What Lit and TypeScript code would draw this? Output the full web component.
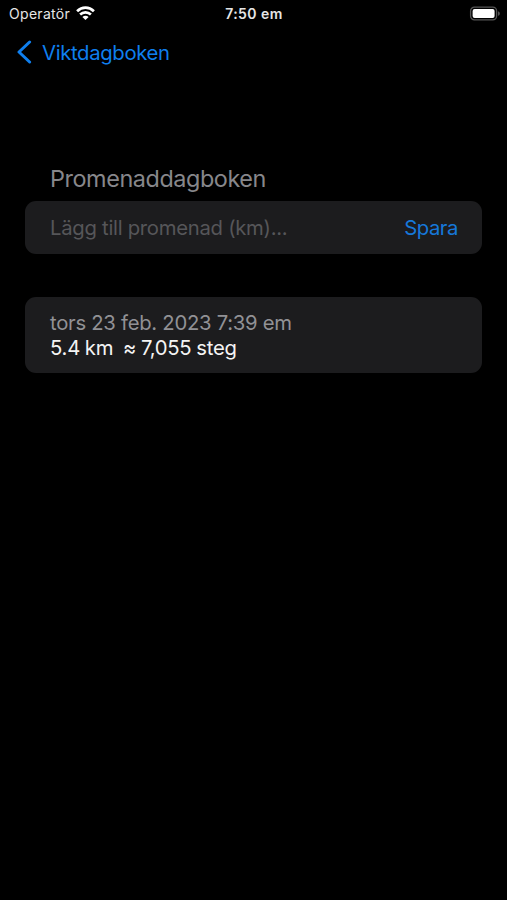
import { LitElement, html, css } from "lit";
import { customElement } from "lit/decorators.js";

@customElement("status-bar")
class StatusBar extends LitElement {
  static styles = css`
    :host { display: grid; grid-template-columns: 1fr auto 1fr; align-items: center; height: 28px; padding: 0 6px 0 9px; color: #e6e6e6; font-size: 14px; line-height: 28px; }
    .carrier { display: flex; align-items: center; gap: 6px; }
    .name { letter-spacing: 0.3px; }
    .wifi { width: 19px; height: 14px; margin-top: -2px; }
    .time { font-weight: 600; font-size: 14px; letter-spacing: 0.45px; margin-right: 2px; }
    .battery { justify-self: end; width: 32px; height: 15px; margin-top: -1px; }
  `;
  render() {
    return html`
      <div class="carrier">
        <span class="name">Operatör</span>
        <svg class="wifi" viewBox="0 0 19 14" fill="none" stroke="#fff" stroke-width="2.7">
          <path d="M1.1 5.3C6 .5 13 .5 17.9 5.3" />
          <path d="M4.1 8.6C7.2 5.7 11.8 5.7 14.9 8.6" />
          <path d="M9.5 14L6.4 10.9C8.2 9.4 10.8 9.4 12.6 10.9Z" fill="#fff" stroke="none" />
        </svg>
      </div>
      <span class="time">7:50 em</span>
      <svg class="battery" viewBox="0 0 32 15">
        <rect x="1.6" y="1.1" width="26" height="12.8" rx="3.8" fill="none" stroke="#555" stroke-width="1.3" />
        <rect x="3.6" y="3" width="22" height="9" rx="2" fill="#fff" />
        <path d="M29.2 5.2C31.2 6 31.2 9 29.2 9.8Z" fill="#666" />
      </svg>
    `;
  }
}

@customElement("app-root")
class AppRoot extends LitElement {
  static styles = css`
    :host { display: flex; flex-direction: column; box-sizing: border-box; height: 900px; background: #000; overflow: hidden; font-family: Inter, "Liberation Sans", sans-serif; font-size: 20.3px; letter-spacing: -0.28px; }
    .nav { display: flex; align-items: center; gap: 10px; height: 48px; padding-left: 17px; color: #0f7fee; }
    .chevron { width: 15px; height: 24px; }
    .back { letter-spacing: -0.34px; }
    .content { display: flex; flex-direction: column; padding: 87px 25px 0 25px; }
    .title { margin: 0 0 7px; padding-left: 25px; color: #87878b; font-weight: 400; font-size: 23.4px; line-height: 31px; letter-spacing: -0.42px; }
    .card { box-sizing: border-box; width: 457px; border-radius: 11px; background: #1c1c1e; padding: 0 24px 0 25px; }
    .entry { display: flex; align-items: center; justify-content: space-between; height: 53px; margin-bottom: 43px; }
    .hint { color: #565659; }
    .save { color: #1678da; letter-spacing: -0.45px; }
    .log { display: flex; flex-direction: column; justify-content: center; height: 76px; line-height: 25px; }
    .date { color: #919195; }
    .walk { color: #f4f4f4; white-space: pre; letter-spacing: -0.25px; word-spacing: -0.6px; }
  `;
  render() {
    return html`
      <status-bar></status-bar>
      <div class="nav">
        <svg class="chevron" viewBox="0 0 15 24" fill="none" stroke="currentColor" stroke-width="3" stroke-linecap="round" stroke-linejoin="round">
          <path d="M12.6 2L2 12L12.6 22" />
        </svg>
        <span class="back">Viktdagboken</span>
      </div>
      <div class="content">
        <h1 class="title">Promenaddagboken</h1>
        <div class="card entry">
          <span class="hint">Lägg till promenad (km)...</span>
          <span class="save">Spara</span>
        </div>
        <div class="card log">
          <span class="date">tors 23 feb. 2023 7:39 em</span>
          <span class="walk">5.4 km  ≈ 7,055 steg</span>
        </div>
      </div>
    `;
  }
}
